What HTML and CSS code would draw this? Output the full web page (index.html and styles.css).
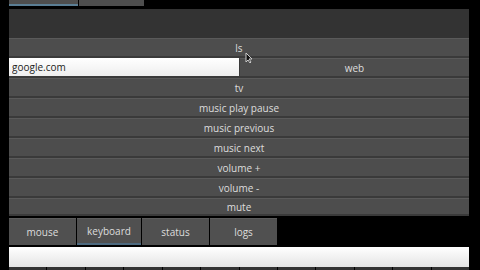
FILE: index.html
```html
<!DOCTYPE html>
<html lang="en">

<head>
    <meta charset="UTF-8">
    <meta name="viewport" content="width=device-width, initial-scale=1.0">
    <title>Remote</title>
    <link rel="stylesheet" href="styles.css">
</head>

<body>
    <div class="tela">
        <div class="abasTopo">
            <div class="aba ativa"></div>
            <div class="aba"></div>
        </div>

        <div class="cabecalho"></div>

        <div class="comandos">
            <button class="linha">ls</button>
            <div class="linhaDupla">
                <input type="text" class="campo" value="google.com">
                <button class="linha">web</button>
            </div>
            <button class="linha">tv</button>
            <button class="linha">music play pause</button>
            <button class="linha">music previous</button>
            <button class="linha">music next</button>
            <button class="linha">volume +</button>
            <button class="linha">volume -</button>
            <button class="linha ultima">mute</button>
        </div>

        <div class="abas">
            <button class="abaBaixo">mouse</button>
            <button class="abaBaixo ativa">keyboard</button>
            <button class="abaBaixo">status</button>
            <button class="abaBaixo">logs</button>
        </div>

        <input type="text" class="entrada">

        <div class="teclas">
            <span></span><span></span><span></span><span></span><span></span>
            <span></span><span></span><span></span><span></span><span></span>
            <span></span><span></span>
        </div>

        <!-- ponteiro do mouse -->
        <svg class="ponteiro" width="8" height="12" viewBox="0 0 8 12">
            <path d="M1 1 L1 10 L3 8 L5 11 L6 10 L4 7 L7 7 Z" fill="#111" stroke="#ccc" stroke-width="1" />
        </svg>
    </div>
</body>

</html>
```

FILE: styles.css
```css
* {
    box-sizing: border-box;
}

body {
    margin: 0;
    background-color: #000;
    font-family: "Open Sans", "Noto Sans", sans-serif;
    font-size: 10px;
    color: #ddd;
}

.tela {
    position: relative;
    width: 460px;
    margin-left: 9px;
    display: flex;
    flex-direction: column;
}

.abasTopo {
    display: flex;
    height: 6px;
}

.abasTopo > .aba {
    width: 65px;
    background-color: #4e4e4e;
    margin-right: 1px;
}

.abasTopo > .aba.ativa {
    width: 69px;
    border-bottom: 2px solid #5b7e94;
}

.cabecalho {
    margin-top: 3px;
    height: 29px;
    background-color: #333;
}

.comandos {
    display: flex;
    flex-direction: column;
}

.linha {
    height: 20px;
    width: 100%;
    padding: 0;
    background-color: #4d4d4d;
    border: none;
    border-top: 1px solid #5a5a5a;
    border-bottom: 2px solid #3a3a3a;
    color: #ddd;
    font-family: inherit;
    font-size: 10px;
    line-height: 16px;
}

.ultima {
    height: 18px;
}

.linhaDupla {
    display: flex;
}

.campo {
    width: 230px;
    height: 20px;
    flex-shrink: 0;
    margin: 0;
    padding: 0 3px;
    border: none;
    border-bottom: 2px solid #3a3a3a;
    background: linear-gradient(#fff, #eee);
    font-family: inherit;
    font-size: 10px;
    color: #222;
}

.linhaDupla > .linha {
    flex-grow: 1;
    border-left: 1px solid #3a3a3a;
}

.abas {
    display: flex;
    gap: 1px;
    margin-top: 2px;
    height: 27px;
}

.abaBaixo {
    width: 67px;
    padding: 0;
    background-color: #505050;
    border: none;
    border-top: 1px solid #5c5c5c;
    color: #ddd;
    font-family: inherit;
    font-size: 10px;
}

.abaBaixo.ativa {
    width: 64px;
    border-bottom: 2px solid #4d6a80;
}

.entrada {
    margin-top: 2px;
    height: 20px;
    width: 100%;
    border: none;
    background: linear-gradient(#fff, #e4e4e4);
}

.teclas {
    display: flex;
    gap: 1px;
    height: 4px;
}

.teclas > span {
    flex-grow: 1;
    background-color: #333;
}

.ponteiro {
    position: absolute;
    left: 236px;
    top: 52px;
}
```
